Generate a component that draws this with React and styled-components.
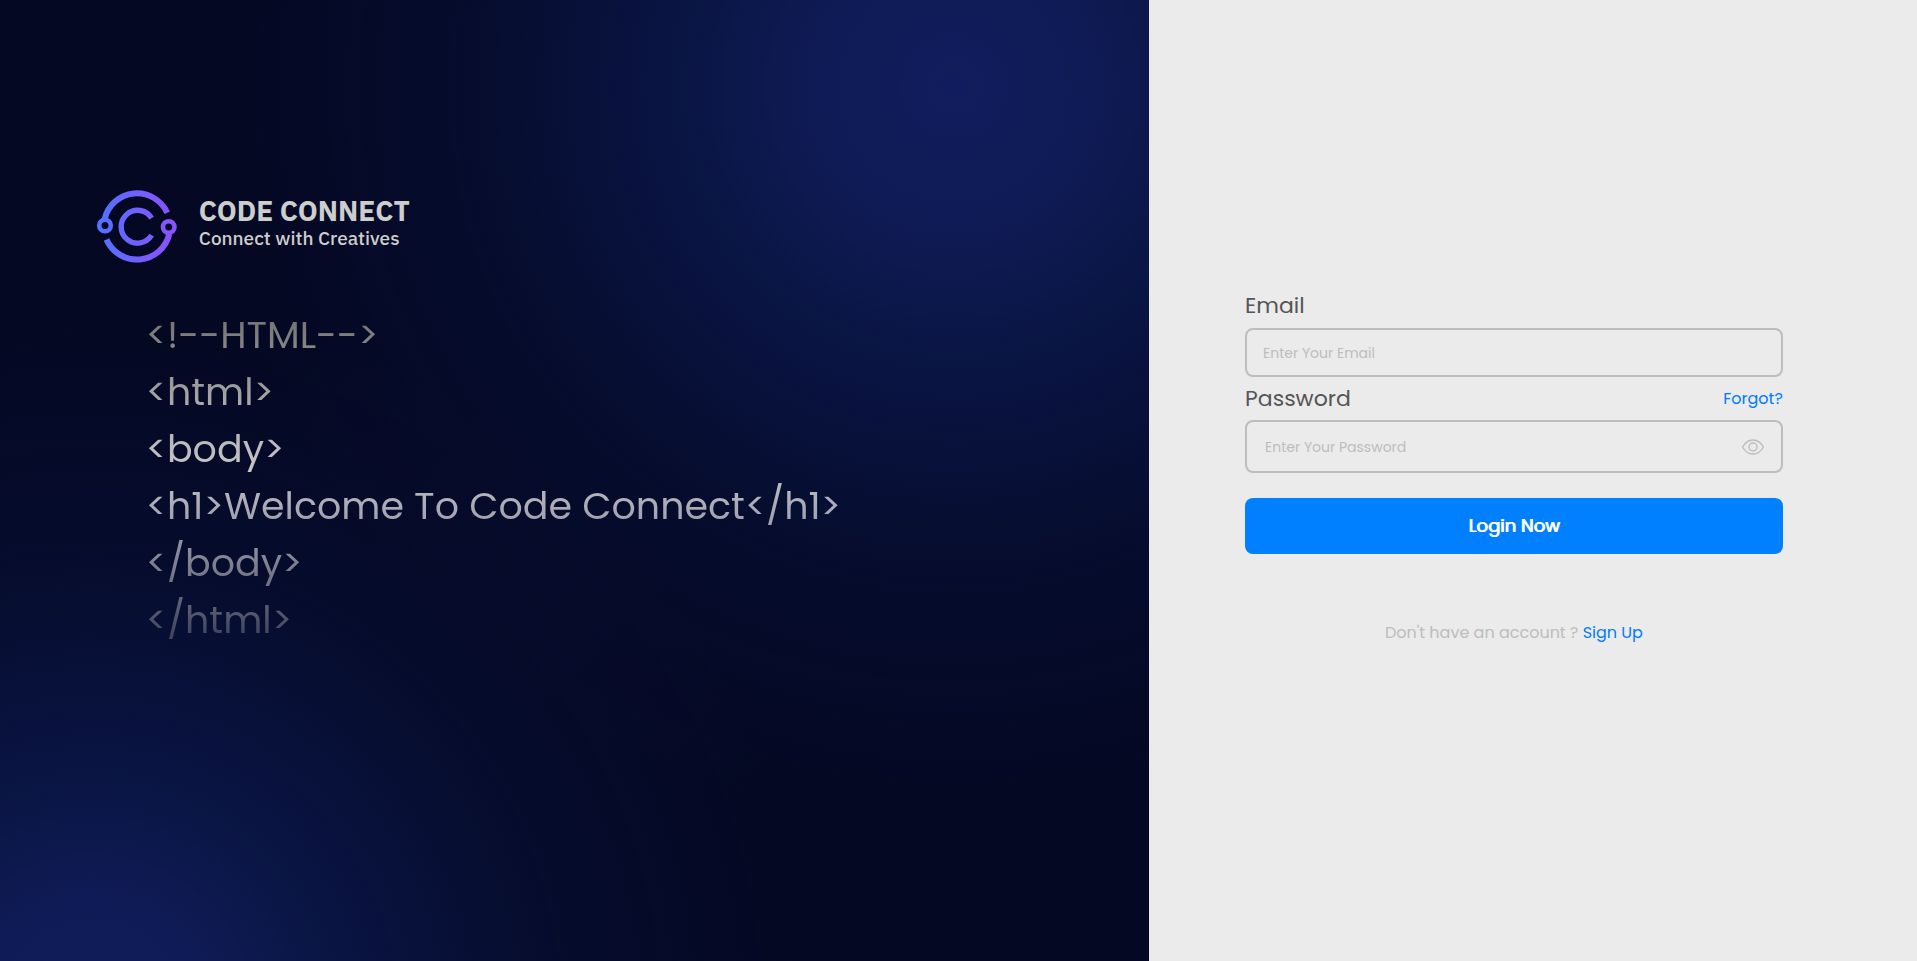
import React, { useState } from "react";
import styled, { createGlobalStyle } from "styled-components";

const GlobalStyle = createGlobalStyle`
  *, *::before, *::after { box-sizing: border-box; }
  body { margin: 0; background: #ebebeb; font-family: Poppins, Inter, "Liberation Sans", sans-serif; }
`;

const Page = styled.main`
  display: grid;
  grid-template-columns: calc(60% - 1px) 1fr;
  min-height: 100vh;
`;

const Showcase = styled.section`
  display: flex;
  flex-direction: column;
  gap: 43px;
  padding: 190px 5vw 64px;
  background:
    radial-gradient(circle 740px at 83% 9%, rgba(18, 30, 98, 0.95) 0%, rgba(16, 30, 92, 0.85) 20%, rgba(12, 26, 82, 0.62) 42%, rgba(8, 20, 66, 0.3) 68%, rgba(4, 10, 36, 0) 100%),
    radial-gradient(circle 720px at 8% 106%, rgba(18, 30, 98, 0.95) 0%, rgba(16, 30, 92, 0.85) 18%, rgba(12, 26, 82, 0.62) 38%, rgba(8, 20, 66, 0.3) 66%, rgba(4, 10, 36, 0) 100%),
    #040822;
`;

const Brand = styled.header`
  display: flex;
  align-items: center;
  gap: 21px;
`;

const LogoMark = styled.svg`
  width: 82px;
  height: 73px;
  fill: none;
`;

const BrandText = styled.div`
  padding-bottom: 8px;
  color: #cdcdcd;
  font-family: "IBM Plex Sans", Roboto, sans-serif;
`;

const BrandName = styled.h1`
  margin: 0;
  font-size: 28px;
  line-height: 30px;
  font-weight: 700;
`;

const Tagline = styled.p`
  margin: 0;
  font-size: 19px;
  line-height: 24px;
  font-weight: 500;
`;

const CodeBlock = styled.div`
  padding-left: 50px;
`;

const CodeLine = styled.p`
  width: fit-content;
  margin: 0;
  font-size: 38px;
  line-height: 57px;
  font-weight: 400;
  color: transparent;
  background: linear-gradient(${(p) => p.$from}, ${(p) => p.$to});
  background-clip: text;
  white-space: nowrap;
`;

const FormPanel = styled.section`
  display: flex;
  flex-direction: column;
  justify-content: center;
  padding: 0 7vw 32px 5vw;
  background: #ebebeb;
`;

const Form = styled.form`
  display: flex;
  flex-direction: column;
`;

const LabelRow = styled.div`
  display: flex;
  align-items: center;
  justify-content: space-between;
  height: ${(p) => p.$height}px;
`;

const Label = styled.label`
  color: #555;
  font-size: 22px;
  line-height: 32px;
  font-weight: 400;
`;

const TextLink = styled.a`
  color: #007bff;
  font-size: 16px;
  line-height: 24px;
  text-decoration: none;
`;

const Field = styled.div`
  display: flex;
  align-items: center;
  gap: 8px;
  height: ${(p) => p.$height}px;
  padding: 0 16px 0 ${(p) => p.$inset}px;
  border: 2px solid #bdbdbd;
  border-radius: 8px;
`;

const Input = styled.input`
  flex: 1;
  min-width: 0;
  padding: 0;
  border: 0;
  outline: 0;
  background: transparent;
  color: #555;
  font: 400 14px/20px Poppins, Inter, "Liberation Sans", sans-serif;
  &::placeholder { color: #bdbdbd; opacity: 1; }
`;

const RevealButton = styled.button`
  display: flex;
  padding: 0;
  border: 0;
  background: none;
  color: #bdbdbd;
  cursor: pointer;
`;

const SubmitButton = styled.button`
  height: 56px;
  margin-top: 25px;
  border: 0;
  border-radius: 8px;
  background: #007fff;
  color: #fff;
  font: 400 18px/28px Poppins, Inter, "Liberation Sans", sans-serif;
  text-shadow: 1px 0 #fff;
  cursor: pointer;
`;

const SignUp = styled.p`
  margin: 67px 0 0;
  color: #bdbdbd;
  font-size: 16px;
  line-height: 24px;
  text-align: center;
`;

const codeLines = [
  { text: "<!--HTML-->", from: "#6c6c6c", to: "#8f8f8f" },
  { text: "<html>", from: "#8c8c8c", to: "#b4b4b4" },
  { text: "<body>", from: "#b0b0b0", to: "#cacacf" },
  { text: "<h1>Welcome To Code Connect</h1>", from: "#bebec6", to: "#9899a8" },
  { text: "</body>", from: "#9899a5", to: "#686b7f" },
  { text: "</html>", from: "#676a7c", to: "#363a55" },
];

function Logo() {
  return (
    <LogoMark viewBox="0 0 82 73" aria-hidden="true">
      <defs>
        <linearGradient id="logo-stroke" gradientUnits="userSpaceOnUse" x1="0" y1="36" x2="82" y2="36">
          <stop offset="0" stopColor="#4f74ff" />
          <stop offset="0.5" stopColor="#7060ff" />
          <stop offset="1" stopColor="#8e50fc" />
        </linearGradient>
      </defs>
      <g stroke="url(#logo-stroke)">
        <path d="M8.700 29A33.200 33.200 0 0 1 71.200 22.700" strokeWidth="6" />
        <path d="M10.500 49.500A33.200 33.200 0 0 0 73.300 44" strokeWidth="6" />
        <path d="M55.600 28.200A16.400 16.400 0 1 0 55.600 45.200" strokeWidth="5.400" />
        <circle cx="9" cy="35.500" r="5.800" strokeWidth="4.600" />
        <circle cx="72.700" cy="37" r="5.800" strokeWidth="4.600" />
      </g>
    </LogoMark>
  );
}

function EyeIcon() {
  return (
    <svg width="24" height="24" viewBox="0 0 24 24" fill="none" stroke="currentColor" strokeWidth="1.4" aria-hidden="true">
      <path d="M1.500 12C4.200 7.400 7.700 5 12 5s7.800 2.400 10.500 7C19.800 16.600 16.300 19 12 19S4.200 16.600 1.500 12Z" strokeLinejoin="round" />
      <circle cx="12" cy="12" r="4" />
    </svg>
  );
}

export default function App() {
  const [visible, setVisible] = useState(false);
  return (
    <>
      <GlobalStyle />
      <Page>
        <Showcase>
          <Brand>
            <Logo />
            <BrandText>
              <BrandName>CODE CONNECT</BrandName>
              <Tagline>Connect with Creatives</Tagline>
            </BrandText>
          </Brand>
          <CodeBlock>
            {codeLines.map((line) => (
              <CodeLine key={line.text} $from={line.from} $to={line.to}>{line.text}</CodeLine>
            ))}
          </CodeBlock>
        </Showcase>
        <FormPanel>
          <Form onSubmit={(e) => e.preventDefault()}>
            <LabelRow $height={44}>
              <Label htmlFor="email">Email</Label>
            </LabelRow>
            <Field $height={49} $inset={16}>
              <Input id="email" type="email" placeholder="Enter Your Email" />
            </Field>
            <LabelRow $height={43}>
              <Label htmlFor="password">Password</Label>
              <TextLink href="#forgot">Forgot?</TextLink>
            </LabelRow>
            <Field $height={53} $inset={18}>
              <Input id="password" type={visible ? "text" : "password"} placeholder="Enter Your Password" />
              <RevealButton type="button" aria-label="Show password" onClick={() => setVisible(!visible)}>
                <EyeIcon />
              </RevealButton>
            </Field>
            <SubmitButton type="submit">Login Now</SubmitButton>
          </Form>
          <SignUp>
            Don't have an account ? <TextLink href="#signup">Sign Up</TextLink>
          </SignUp>
        </FormPanel>
      </Page>
    </>
  );
}
